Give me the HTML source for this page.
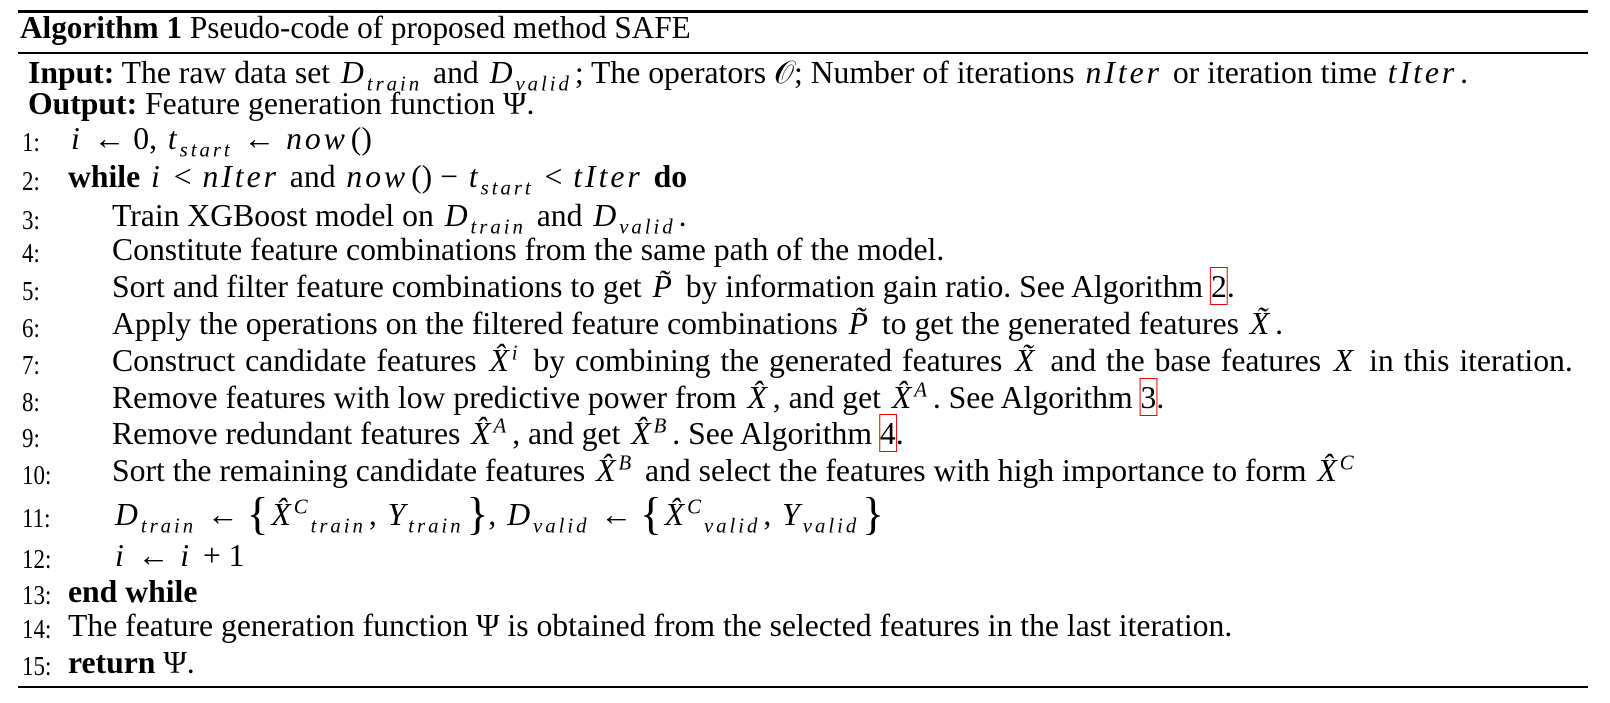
<!DOCTYPE html>
<html><head><meta charset="utf-8"><style>
body{margin:0;width:1610px;height:703px;background:#fff;position:relative;overflow:hidden;font-family:"Liberation Serif",serif;color:#000;font-size:32px}
.r{position:absolute;left:18px;width:1570px;background:#000}
.l{position:absolute;white-space:nowrap;line-height:30px;transform-origin:0 0;transform:scaleX(0.99)}
.n{position:absolute;white-space:nowrap;line-height:30px;font-size:27px;transform:scaleX(0.85);transform-origin:0 0}
i{font-style:italic;letter-spacing:3px;margin:0 3px}
sub,sup{font-size:21px;line-height:0}
.bx{outline:1.5px solid #e00;outline-offset:0}
.br{font-size:46px;vertical-align:-4px}
</style></head><body>
<div class="r" style="top:10px;height:3px"></div>
<div class="l" style="left:20px;top:12px;transform:scaleX(0.975)"><b>Algorithm 1</b> Pseudo-code of proposed method SAFE</div>
<div class="r" style="top:52px;height:1.5px"></div>
<div class="l" style="left:28px;top:57px"><b>Input:</b> The raw data set <i>D<sub>train</sub></i> and <i>D<sub>valid</sub></i>; The operators 𝒪; Number of iterations <i>nIter</i> or iteration time <i>tIter</i>.</div>
<div class="l" style="left:28px;top:88px"><b>Output:</b> Feature generation function Ψ.</div>
<div class="n" style="left:22px;top:127px">1:</div><div class="l" style="left:68px;top:123px"><i>i</i> ← 0, <i>t<sub>start</sub></i> ← <i>now</i>()</div>
<div class="n" style="left:22px;top:166px">2:</div><div class="l" style="left:68px;top:161px"><b>while</b> <i>i</i> &lt; <i>nIter</i> and <i>now</i>() − <i>t<sub>start</sub></i> &lt; <i>tIter</i> <b>do</b></div>
<div class="n" style="left:22px;top:205px">3:</div><div class="l" style="left:112px;top:200px">Train XGBoost model on <i>D<sub>train</sub></i> and <i>D<sub>valid</sub></i>.</div>
<div class="n" style="left:22px;top:238px">4:</div><div class="l" style="left:112px;top:234px">Constitute feature combinations from the same path of the model.</div>
<div class="n" style="left:22px;top:276px">5:</div><div class="l" style="left:112px;top:271px">Sort and filter feature combinations to get <i>P̃</i> by information gain ratio. See Algorithm <span class="bx">2</span>.</div>
<div class="n" style="left:22px;top:313px">6:</div><div class="l" style="left:112px;top:308px">Apply the operations on the filtered feature combinations <i>P̃</i> to get the generated features <i>X̃</i>.</div>
<div class="n" style="left:22px;top:350px">7:</div><div class="l" style="left:112px;top:345px;word-spacing:2px">Construct candidate features <i>X̂<sup>i</sup></i> by combining the generated features <i>X̃</i> and the base features <i>X</i> in this iteration.</div>
<div class="n" style="left:22px;top:387px">8:</div><div class="l" style="left:112px;top:382px">Remove features with low predictive power from <i>X̂</i>, and get <i>X̂<sup>A</sup></i>. See Algorithm <span class="bx">3</span>.</div>
<div class="n" style="left:22px;top:423px">9:</div><div class="l" style="left:112px;top:418px">Remove redundant features <i>X̂<sup>A</sup></i>, and get <i>X̂<sup>B</sup></i>. See Algorithm <span class="bx">4</span>.</div>
<div class="n" style="left:22px;top:460px">10:</div><div class="l" style="left:112px;top:455px">Sort the remaining candidate features <i>X̂<sup>B</sup></i> and select the features with high importance to form <i>X̂<sup>C</sup></i></div>
<div class="n" style="left:22px;top:503px">11:</div><div class="l" style="left:112px;top:499px"><i>D<sub>train</sub></i> ← <span class="br">{</span><i>X̂<sup>C</sup><sub>train</sub></i>, <i>Y<sub>train</sub></i><span class="br">}</span>, <i>D<sub>valid</sub></i> ← <span class="br">{</span><i>X̂<sup>C</sup><sub>valid</sub></i>, <i>Y<sub>valid</sub></i><span class="br">}</span></div>
<div class="n" style="left:22px;top:544px">12:</div><div class="l" style="left:112px;top:540px"><i>i</i> ← <i>i</i> + 1</div>
<div class="n" style="left:22px;top:580px">13:</div><div class="l" style="left:68px;top:576px"><b>end while</b></div>
<div class="n" style="left:22px;top:614px">14:</div><div class="l" style="left:68px;top:610px">The feature generation function Ψ is obtained from the selected features in the last iteration.</div>
<div class="n" style="left:22px;top:651px">15:</div><div class="l" style="left:68px;top:647px"><b>return</b> Ψ.</div>
<div class="r" style="top:686px;height:1.5px"></div>
</body></html>
